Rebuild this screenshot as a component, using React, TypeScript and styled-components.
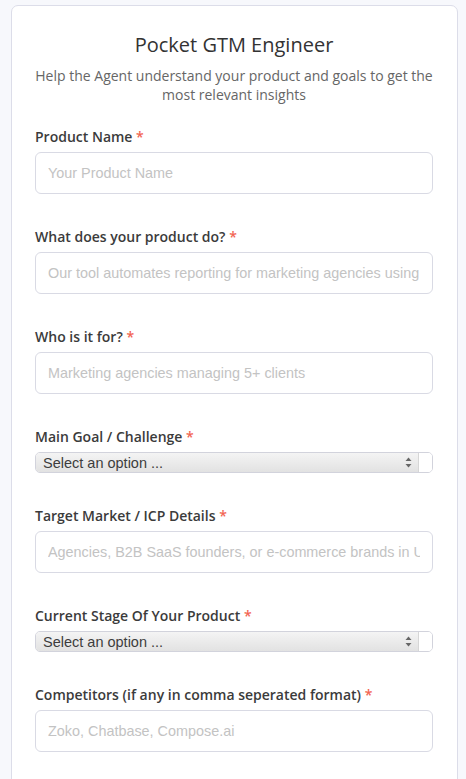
import React from 'react'
import styled, { createGlobalStyle } from 'styled-components'

const GlobalStyle = createGlobalStyle`
  html, body {
    margin: 0;
    padding: 0;
    background: #f7f8fc;
  }
  * {
    box-sizing: border-box;
  }
`

// Page wrapper
const Page = styled.div`
  padding: 5px 8px 0 11px;
  font-family: 'Open Sans', 'Noto Sans', sans-serif;
`

// White card with the form
const Card = styled.div`
  background: #ffffff;
  border: 1px solid #dcdde9;
  border-radius: 7px;
  padding: 25px 24px 40px 23px;
  min-height: 800px;
`

const Title = styled.h1`
  margin: 0;
  text-align: center;
  font-size: 20px;
  line-height: 28px;
  font-weight: 400;
  color: #333333;
`

const Subtitle = styled.p`
  margin: 7px 0 0;
  text-align: center;
  font-size: 14px;
  line-height: 19px;
  color: #666666;
`

const Form = styled.div`
  display: flex;
  flex-direction: column;
  margin-top: 23px;
`

const Field = styled.div`
  display: flex;
  flex-direction: column;
  gap: 5px;
  margin-bottom: 33px;
`

const Label = styled.label`
  font-size: 14px;
  line-height: 20px;
  font-weight: 600;
  color: #3b3b3b;
`

const Required = styled.span`
  color: #f26452;
`

const TextInput = styled.input`
  height: 42px;
  width: 100%;
  border: 1px solid #d9dae4;
  border-radius: 6px;
  padding: 0 12px;
  font-family: 'Liberation Sans', Arial, sans-serif;
  font-size: 14.4px;
  color: #333;
  background: #fff;
  outline: none;

  &::placeholder {
    color: #c3c3c3;
  }
`

// macOS-style native select look
const SelectBox = styled.div`
  display: flex;
  height: 21px;
  width: 100%;
  border: 1px solid #d2d3dc;
  border-radius: 5px;
  overflow: hidden;
  background: #fff;
`

const SelectButton = styled.div`
  flex: 1;
  display: flex;
  align-items: center;
  justify-content: space-between;
  padding: 0 6px 0 7px;
  background: linear-gradient(to bottom, #f4f4f4 0%, #e9e9e9 60%, #e2e2e2 100%);
  border-right: 1px solid #d6d6d6;
  font-family: 'Liberation Sans', Arial, sans-serif;
  font-size: 14.5px;
  color: #3d3d3d;
`

const SelectEnd = styled.div`
  width: 13px;
  background: #fff;
`

const Arrows = () => (
  <svg width="7" height="11" viewBox="0 0 7 11">
    <path d="M3.5 0.5 L6.5 4 L0.5 4 Z" fill="#666" />
    <path d="M3.5 10.5 L6.5 7 L0.5 7 Z" fill="#666" />
  </svg>
)

type FieldProps = { label: string; placeholder?: string; select?: boolean }

const FormField = ({ label, placeholder, select }: FieldProps) => (
  <Field>
    <Label>
      {label} <Required>*</Required>
    </Label>
    {select ? (
      <SelectBox>
        <SelectButton>
          <span>Select an option ...</span>
          <Arrows />
        </SelectButton>
        <SelectEnd />
      </SelectBox>
    ) : (
      <TextInput placeholder={placeholder} />
    )}
  </Field>
)

export default function App() {
  return (
    <>
      <GlobalStyle />
      <Page>
        <Card>
          <Title>Pocket GTM Engineer</Title>
          <Subtitle>
            Help the Agent understand your product and goals to get the most relevant insights
          </Subtitle>
          <Form>
            <FormField label="Product Name" placeholder="Your Product Name" />
            <FormField
              label="What does your product do?"
              placeholder="Our tool automates reporting for marketing agencies using AI"
            />
            <FormField label="Who is it for?" placeholder="Marketing agencies managing 5+ clients" />
            <FormField label="Main Goal / Challenge" select />
            <FormField
              label="Target Market / ICP Details"
              placeholder="Agencies, B2B SaaS founders, or e-commerce brands in US"
            />
            <FormField label="Current Stage Of Your Product" select />
            <FormField
              label="Competitors (if any in comma seperated format)"
              placeholder="Zoko, Chatbase, Compose.ai"
            />
          </Form>
        </Card>
      </Page>
    </>
  )
}
